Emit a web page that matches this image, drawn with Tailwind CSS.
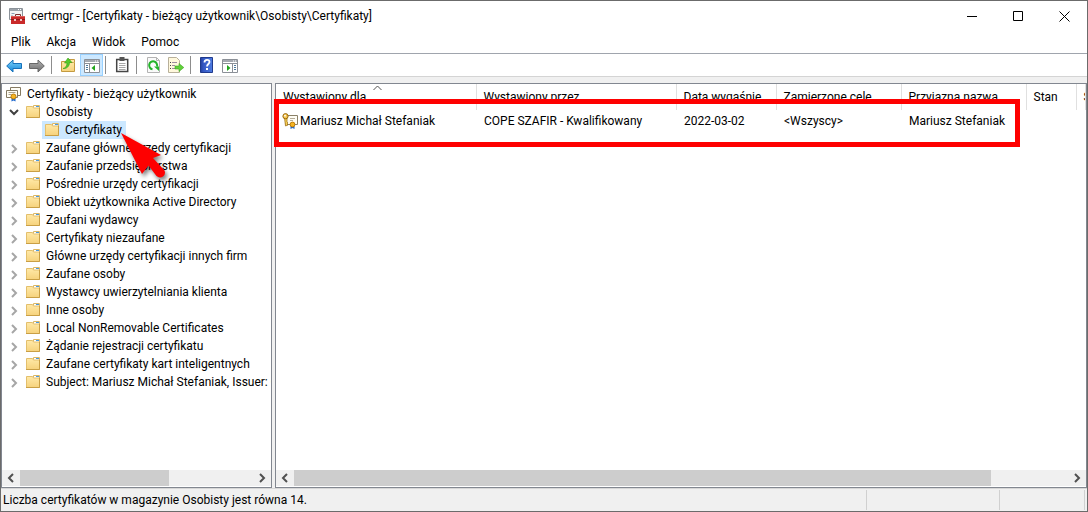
<!DOCTYPE html>
<html lang="pl">
<head>
<meta charset="utf-8">
<title>certmgr</title>
<script src="https://cdn.jsdelivr.net/npm/@tailwindcss/browser@4"></script>
</head>
<body class="h-screen overflow-hidden bg-[#f0f0f0] font-['Segoe_UI','Roboto',sans-serif] text-xs text-black">
<svg class="absolute size-0" aria-hidden="true">
  <defs>
    <linearGradient id="gf" x1="0" y1="0" x2="0" y2="1"><stop offset="0" stop-color="#ffe9a8"/><stop offset="1" stop-color="#f6d27c"/></linearGradient>
    <linearGradient id="gb" x1="0" y1="0" x2="0" y2="1"><stop offset="0" stop-color="#7fd4fb"/><stop offset="1" stop-color="#0f84d8"/></linearGradient>
    <linearGradient id="gg" x1="0" y1="0" x2="0" y2="1"><stop offset="0" stop-color="#b4b4b4"/><stop offset="1" stop-color="#6c6c6c"/></linearGradient>
    <linearGradient id="gh" x1="0" y1="0" x2="1" y2="0"><stop offset="0" stop-color="#23419f"/><stop offset=".25" stop-color="#3558c4"/><stop offset="1" stop-color="#4d7be0"/></linearGradient>
    <symbol id="folder" viewBox="0 0 16 16">
      <path d="M7.500 3.500v-2h6V4" fill="#fff" stroke="#dcb865"/>
      <path d="M10 2.500h3" stroke="#4b9be0"/>
      <path d="M.5 2.500h6l1 1.500h6v9.500H.5z" fill="url(#gf)" stroke="#e3bf6c"/>
      <path d="M0 13.500h13.500V4" fill="none" stroke="#c99f45"/>
    </symbol>
    <symbol id="cert" viewBox="0 0 16 16">
      <path d="M4.500 1.500h10v8h-10z" fill="#fffdf5" stroke="#857a62"/>
      <path d="M.5 4.500h11v7H.5z" fill="#fffdf5" stroke="#857a62"/>
      <path d="M2.500 6.500h7M2.500 8.500h3" stroke="#a8a08c"/>
      <path d="M5.500 11.500V15.500l2-1 2 1v-4z" fill="#1f69cf"/>
      <circle cx="7.500" cy="10.500" r="2.500" fill="#f5b422" stroke="#c07d08"/>
    </symbol>
    <symbol id="certkey" viewBox="0 0 16 16">
      <path d="M3.500 2.500h12v9h-12z" fill="#fffdf5" stroke="#8a8168"/>
      <path d="M8 5.500h5M8 7.500h3" stroke="#b5ad99"/>
      <path d="M2.500 5l1 8 2.500-1-1-1 1-1-1-1V5z" fill="#f6cf55" stroke="#9a6a10" stroke-width=".7"/>
      <circle cx="3.500" cy="3.200" r="2.600" fill="#f5c64c" stroke="#9a6a10"/>
      <circle cx="3" cy="2.700" r=".9" fill="#fff"/>
      <path d="M8.500 12v4l2-1 2 1v-4z" fill="#1f69cf"/>
      <circle cx="10.500" cy="11.500" r="2.400" fill="#f5b422" stroke="#c07d08"/>
    </symbol>
    <symbol id="panel" viewBox="0 0 16 14">
      <path d="M.5.500h15v13H.5z" fill="#fff" stroke="#8b9097"/>
      <path d="M1 2h14" stroke="#a5aab1" stroke-width="2"/>
      <path d="M11 2h1m1 0h1" stroke="#fff"/>
      <path d="M0 4.500h16" stroke="#8b9097"/>
    </symbol>
    <symbol id="chev" viewBox="0 0 8 10"><path d="M2 1l4 4-4 4" fill="none" stroke="currentColor" stroke-width="2"/></symbol>
  </defs>
</svg>
<div class="relative flex h-full flex-col border border-[#6b6b6b]">
  <header class="flex h-[30px] shrink-0 items-center bg-white pl-2">
    <svg class="size-4 shrink-0" viewBox="0 0 16 16">
      <path d="M.5.500h13v11H.5z" fill="#f3f3f3" stroke="#8b9299"/>
      <path d="M1 2h12" stroke="#9ba2a9" stroke-width="2"/>
      <path d="M9 1.500h1m1 0h1" stroke="#fff"/>
      <path d="M2.500 5.500h3m-3 2h1" stroke="#8ba1b4"/>
      <path d="M6.500 8.500v-2h5v2" fill="none" stroke="#7b3030"/>
      <path d="M2 8h14v8H2z" fill="#c92a2a"/>
      <path d="M2 8.500h14" stroke="#dd5a55"/>
      <path d="M2 11.500h14" stroke="#8f1717"/>
      <path d="M5 11h2v2H5zm6 0h2v2h-2z" fill="#f0c4c4"/>
    </svg>
    <h1 class="ml-[6px] min-w-0 flex-1 truncate whitespace-nowrap">certmgr - [Certyfikaty - bieżący użytkownik\Osobisty\Certyfikaty]</h1>
    <button aria-label="Minimalizuj" class="flex h-full w-[46px] items-center justify-center"><svg class="size-[11px]" viewBox="0 0 11 11"><path d="M0 5.500h10" stroke="#000"/></svg></button>
    <button aria-label="Maksymalizuj" class="flex h-full w-[46px] items-center justify-center"><svg class="size-[11px]" viewBox="0 0 11 11"><path d="M.5.500h9v9h-9z" fill="none" stroke="#000"/></svg></button>
    <button aria-label="Zamknij" class="flex h-full w-[46px] items-center justify-center"><svg class="size-[11px]" viewBox="0 0 11 11"><path d="M.5.500l10 10m0-10l-10 10" stroke="#000"/></svg></button>
  </header>
  <nav class="flex h-[22px] shrink-0 items-center gap-4 bg-white pl-[10px]">
    <button>Plik</button><button>Akcja</button><button>Widok</button><button>Pomoc</button>
  </nav>
  <div role="toolbar" class="flex h-[24px] shrink-0 items-center border-y border-t-[#a0a5ad] border-b-[#d4d4d4] bg-white pl-[5px]">
    <button aria-label="Wstecz"><svg class="mt-px h-[14px] w-4" viewBox="0 0 16 14"><path d="M.7 7l6.300-6v3.500h8.500v5H7V13z" fill="url(#gb)" stroke="#1671ba"/></svg></button>
    <button aria-label="Dalej" class="ml-[7px]"><svg class="mt-px h-[14px] w-4" viewBox="0 0 16 14"><path d="M15.300 7L9 1v3.500H.5v5H9V13z" fill="url(#gg)" stroke="#686868"/></svg></button>
    <div class="ml-[6px] h-[18px] w-px bg-[#8d8d8d]"></div>
    <button aria-label="W górę" class="ml-2"><svg class="size-4" viewBox="0 0 16 16"><path d="M1.500 4.500h4l1 1h8v9h-13z" fill="url(#gf)" stroke="#c49a40"/><path d="M9 4.500V2.500h5.500v3" fill="#ffe9a8" stroke="#c49a40"/><path d="M3 11.500c2.500-.5 4-2.500 4-5.500H4.500L8 1l4 4.500H9.500c0 4-3 6.500-6.500 6z" fill="#56c92c" stroke="#35a016" stroke-width=".6"/></svg></button>
    <button aria-label="Pokaż/ukryj drzewo konsoli" class="ml-[4px] flex h-[22px] w-[23px] items-center justify-center border border-[#99d1ff] bg-[#cce8ff]"><svg class="mt-[2px] h-[14px] w-4 shrink-0" viewBox="0 0 16 14"><use href="#panel"/><path d="M5.500 5v8" stroke="#8b9097"/><path d="M2 6.500h2m-2 2h2m-2 2h2" stroke="#4d7a9c"/><path d="M11 6v6L7.500 9z" fill="#21a51c"/></svg></button>
    <div class="ml-[2px] h-[18px] w-px bg-[#8d8d8d]"></div>
    <button aria-label="Kopiuj" class="ml-[8px]"><svg class="size-4" viewBox="0 0 16 16"><path d="M2.700 2.500h11v12h-11z" fill="#fff" stroke="#454545" stroke-width="1.500"/><path d="M5.500 0h5v4h-5z" fill="#555"/><path d="M5 6.500h6.500M5 8.500h6.500M5 10.500h6.500M5 12.500h6.500" stroke="#a8a8a8"/></svg></button>
    <div class="ml-[6px] h-[18px] w-px bg-[#8d8d8d]"></div>
    <button aria-label="Odśwież" class="ml-[9px]"><svg class="size-4" viewBox="0 0 16 16"><path d="M1.500.500h9l3 3v12h-12z" fill="#fafafa" stroke="#b3b3b3"/><path d="M10.500.500v3h3" fill="none" stroke="#b3b3b3"/><path d="M6.500 12.300a4 4 0 1 1 4.500-2.800" fill="none" stroke="#23b32a" stroke-width="2"/><path d="M8 9.500h5v4.500z" fill="#23b32a"/></svg></button>
    <button aria-label="Eksportuj listę" class="ml-[6px]"><svg class="size-4" viewBox="0 0 16 16"><path d="M.5.500h8l3 3v12H.5z" fill="#fff8dc" stroke="#b8b09a"/><path d="M2 5.500h1m-1 3h1m-1 3h1" stroke="#444"/><path d="M4 5.500h5m-5 3h3m-3 3h3" stroke="#9d8b9d"/><path d="M7 9h4V6.500l4.800 4-4.800 4V12H7z" fill="#61d13a" stroke="#3ba51d" stroke-width=".6"/></svg></button>
    <div class="ml-[6px] h-[18px] w-px bg-[#8d8d8d]"></div>
    <button aria-label="Pomoc" class="ml-[8px]"><svg class="size-4" viewBox="0 0 16 16"><path d="M1.500.500h12v15h-12z" fill="url(#gh)" stroke="#203a8d"/><path d="M5.500 5.500c0-3.500 5-3.500 5-.5 0 2-2.500 2-2.500 4.500" fill="none" stroke="#fff" stroke-width="1.800"/><path d="M7 11h2v2H7z" fill="#fff"/></svg></button>
    <button aria-label="Pokaż/ukryj okienko akcji" class="ml-[7px]"><svg class="mt-[2px] h-[14px] w-4" viewBox="0 0 16 14"><use href="#panel"/><path d="M10.500 5v8" stroke="#8b9097"/><path d="M12 6.500h2m-2 2h2m-2 2h2" stroke="#4d7a9c"/><path d="M5 6v6l3.500-3z" fill="#21a51c"/></svg></button>
  </div>
  <main class="flex min-h-0 flex-1 gap-[3px] pt-[6px]">
    <section class="flex w-[271px] shrink-0 flex-col border border-[#828790] bg-white">
      <ul class="min-h-0 flex-1 overflow-hidden pt-px pr-px whitespace-nowrap *:flex *:h-[18px] *:items-center" id="tree">
        <li class="pl-1"><svg class="size-4 shrink-0"><use href="#cert"/></svg><span class="ml-[5px]">Certyfikaty - bieżący użytkownik</span></li>
        <li class="pl-[6px]"><svg class="h-[10px] w-3 shrink-0" viewBox="0 0 12 10"><path d="M2 3l4 4 4-4" fill="none" stroke="#404040" stroke-width="2"/></svg><svg class="ml-[6px] size-4 shrink-0"><use href="#folder"/></svg><span class="ml-1">Osobisty</span></li>
        <li class="pl-10"><a href="#" class="flex h-full items-center bg-[#cce8ff] pr-1 pl-[3px]"><svg class="size-4 shrink-0"><use href="#folder"/></svg><span class="ml-1">Certyfikaty</span></a></li>
      </ul>
      <div class="mb-px flex h-4 shrink-0 items-center bg-[#f0f0f0] text-[#505050]">
        <button aria-label="Przewiń w lewo" class="flex w-[18px] justify-center"><svg class="h-[10px] w-2 -scale-x-100"><use href="#chev"/></svg></button>
        <div class="h-full flex-1"><div class="h-full w-[64%] bg-[#cdcdcd]"></div></div>
        <button aria-label="Przewiń w prawo" class="flex w-[18px] justify-center"><svg class="h-[10px] w-2"><use href="#chev"/></svg></button>
      </div>
    </section>
    <section class="relative flex min-w-0 flex-1 flex-col border border-[#828790] bg-white">
      <div class="min-h-0 flex-1 overflow-hidden">
        <table class="w-full table-fixed border-collapse text-left whitespace-nowrap">
          <colgroup><col class="w-[200px]"><col class="w-[200px]"><col class="w-[100px]"><col class="w-[125px]"><col class="w-[125px]"><col class="w-[50px]"><col></colgroup>
          <thead>
            <tr class="h-[26px] *:overflow-hidden *:border-r *:border-[#e0e0e0] *:p-0 *:pl-[7px] *:font-normal">
              <th class="relative">Wystawiony dla<svg class="absolute top-px left-[97px] h-[6px] w-[9px]" viewBox="0 0 9 6"><path d="M.5 5l4-4 4 4" fill="none" stroke="#555"/></svg></th><th>Wystawiony przez</th><th>Data wygaśnię</th><th>Zamierzone cele</th><th>Przyjazna nazwa</th><th>Stan</th><th class="border-r-0">S</th>
            </tr>
          </thead>
          <tbody>
            <tr class="h-[22px] *:p-0 *:pl-2">
              <td><div class="-ml-[2px] flex items-center gap-[2px]"><svg class="size-4 shrink-0"><use href="#certkey"/></svg>Mariusz Michał Stefaniak</div></td><td>COPE SZAFIR - Kwalifikowany</td><td>2022-03-02</td><td>&lt;Wszyscy&gt;</td><td>Mariusz Stefaniak</td><td></td><td></td>
            </tr>
          </tbody>
        </table>
      </div>
      <div class="mb-px flex h-4 shrink-0 items-center bg-[#f0f0f0] text-[#505050]">
        <button aria-label="Przewiń w lewo" class="flex w-[18px] justify-center"><svg class="h-[10px] w-2 -scale-x-100"><use href="#chev"/></svg></button>
        <div class="h-full flex-1"><div class="h-full w-[90%] bg-[#cdcdcd]"></div></div>
        <button aria-label="Przewiń w prawo" class="flex w-[18px] justify-center"><svg class="h-[10px] w-2"><use href="#chev"/></svg></button>
      </div>
    </section>
  </main>
  <footer class="flex h-[23px] shrink-0 items-center border-t border-[#d7d7d7] pl-[2px]">
    <span class="flex-1">Liczba certyfikatów w magazynie Osobisty jest równa 14.</span>
    <span class="h-5 w-[133px] border-l border-[#d0d0d0]"></span><span class="h-5 w-[86px] border-x border-[#d0d0d0]"></span><span class="w-[2px]"></span>
  </footer>
  <div class="pointer-events-none absolute top-[98px] left-[273px] h-[48px] w-[746px] border-5 border-[#fe0000]"></div>
  <svg class="pointer-events-none absolute top-[129px] left-[115px] h-[56px] w-[58px] drop-shadow-[2px_3px_2px_rgba(0,0,0,0.5)]" viewBox="116 130 58 56"><path d="M121 133L161 155L153 158L164.500 170.500Q166 174 163 176.500Q159.500 178.500 156.500 176L148.500 165.500L142 174z" fill="#fe0000"/></svg>
</div>
<script>
  const names = ["Zaufane główne urzędy certyfikacji","Zaufanie przedsiębiorstwa","Pośrednie urzędy certyfikacji","Obiekt użytkownika Active Directory","Zaufani wydawcy","Certyfikaty niezaufane","Główne urzędy certyfikacji innych firm","Zaufane osoby","Wystawcy uwierzytelniania klienta","Inne osoby","Local NonRemovable Certificates","Żądanie rejestracji certyfikatu","Zaufane certyfikaty kart inteligentnych","Subject: Mariusz Michał Stefaniak, Issuer: C"];
  document.getElementById("tree").insertAdjacentHTML("beforeend", names.map(n => `<li class="pl-[6px]"><svg class="mt-[2px] mr-px ml-[1px] h-[10px] w-[10px] shrink-0 text-[#a6a6a6]"><use href="#chev"/></svg><svg class="ml-[6px] size-4 shrink-0"><use href="#folder"/></svg><span class="ml-1 shrink-0">${n}</span></li>`).join(""));
</script>
</body>
</html>
